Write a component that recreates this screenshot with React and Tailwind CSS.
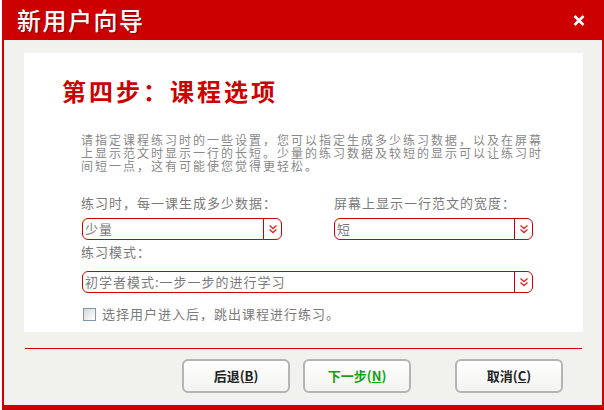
import React from "react";

const F = { fontFamily: '"Noto Sans CJK SC", "Noto Sans", sans-serif' };

function Chevron() {
  return (
    <svg width="10" height="10" viewBox="0 0 10 10" fill="none">
      <polyline points="1.5,1.5 5,4.5 8.5,1.5" stroke="#e02828" strokeWidth="1.4" />
      <polyline points="1.5,5.5 5,8.5 8.5,5.5" stroke="#e02828" strokeWidth="1.4" />
    </svg>
  );
}

function Select({ value, className }) {
  return (
    <div className={"h-[22px] border border-[#cc0000] rounded-[6px] flex bg-white " + className}>
      <div className="flex-1 pl-[2px] text-[13px] tracking-[1px] leading-[20px] text-[#7a7a7a]">{value}</div>
      <div className="w-[18px] border-l border-[#cc0000] flex items-center justify-center">
        <Chevron />
      </div>
    </div>
  );
}

function Btn({ children, green }) {
  return (
    <div
      className={
        "w-[108px] h-[34px] rounded-[6px] border-2 border-[#b4b4b4] bg-gradient-to-b from-white to-[#f3f3f1] flex items-center justify-center text-[13px] font-bold " +
        (green ? "text-[#12a012]" : "text-[#222]")
      }
    >
      {children}
    </div>
  );
}

export default function App() {
  return (
    <div className="w-[604px] h-[410px] bg-white overflow-hidden" style={F}>
      <div className="ml-[2px] w-[602px] h-[410px] bg-[#cc0000] flex flex-col pl-[2px] pr-[2px] pb-[5px]">
        <div className="h-[40px] flex items-center justify-between pl-[13px] pr-[17px]">
          <div className="text-white text-[24px] font-medium tracking-[1.5px] leading-[40px] [text-shadow:1px_1px_0_rgba(90,0,0,0.6)]">
            新用户向导
          </div>
          <svg width="12" height="11" viewBox="0 0 12 11">
            <path d="M1.5 1 L10.5 10 M10.5 1 L1.5 10" stroke="white" strokeWidth="2.6" />
          </svg>
        </div>
        <div className="flex-1 bg-[#f1f1ed] pt-[13px] pl-[20px] pr-[19px] flex flex-col">
          <div className="h-[279px] bg-white pl-[57px] pt-[26px]">
            <div className="-ml-[19px] text-[24px] leading-[24px] tracking-[3px] font-bold text-[#cc0000]">
              第四步：课程选项
            </div>
            <div className="mt-[30px] text-[12px] tracking-[2px] leading-[13px] text-[#888] whitespace-nowrap">
              请指定课程练习时的一些设置，您可以指定生成多少练习数据，以及在屏幕
              <br />
              上显示范文时显示一行的长短。少量的练习数据及较短的显示可以让练习时
              <br />
              间短一点，这有可能使您觉得更轻松。
            </div>
            <div className="mt-[24px] flex">
              <div className="w-[253px]">
                <div className="text-[13px] tracking-[1px] leading-[13px] text-[#7a7a7a]">练习时，每一课生成多少数据：</div>
                <Select value="少量" className="mt-[9px] ml-[1px] w-[200px]" />
              </div>
              <div>
                <div className="text-[13px] tracking-[1px] leading-[13px] text-[#7a7a7a]">屏幕上显示一行范文的宽度：</div>
                <Select value="短" className="mt-[9px] w-[199px]" />
              </div>
            </div>
            <div className="mt-[5px] text-[13px] tracking-[1px] leading-[13px] text-[#7a7a7a]">练习模式：</div>
            <Select value="初学者模式:一步一步的进行学习" className="mt-[13px] ml-[1px] w-[451px]" />
            <div className="mt-[14px] ml-[2px] flex items-center">
              <div className="w-[13px] h-[13px] border border-[#8096ae] bg-gradient-to-br from-[#d8d8d2] to-white" />
              <div className="ml-[6px] text-[13px] tracking-[1px] leading-[14px] text-[#7a7a7a]">
                选择用户进入后，跳出课程进行练习。
              </div>
            </div>
          </div>
          <div className="mt-[16px] ml-[1px] mr-[1px] h-px bg-[#cc0000]" />
          <div className="mt-[10px] pl-[158px] flex">
            <Btn>
              后退(<span className="underline">B</span>)
            </Btn>
            <div className="ml-[13px]">
              <Btn green>
                下一步(<span className="underline">N</span>)
              </Btn>
            </div>
            <div className="ml-[44px]">
              <Btn>
                取消(<span className="underline">C</span>)
              </Btn>
            </div>
          </div>
        </div>
      </div>
    </div>
  );
}
